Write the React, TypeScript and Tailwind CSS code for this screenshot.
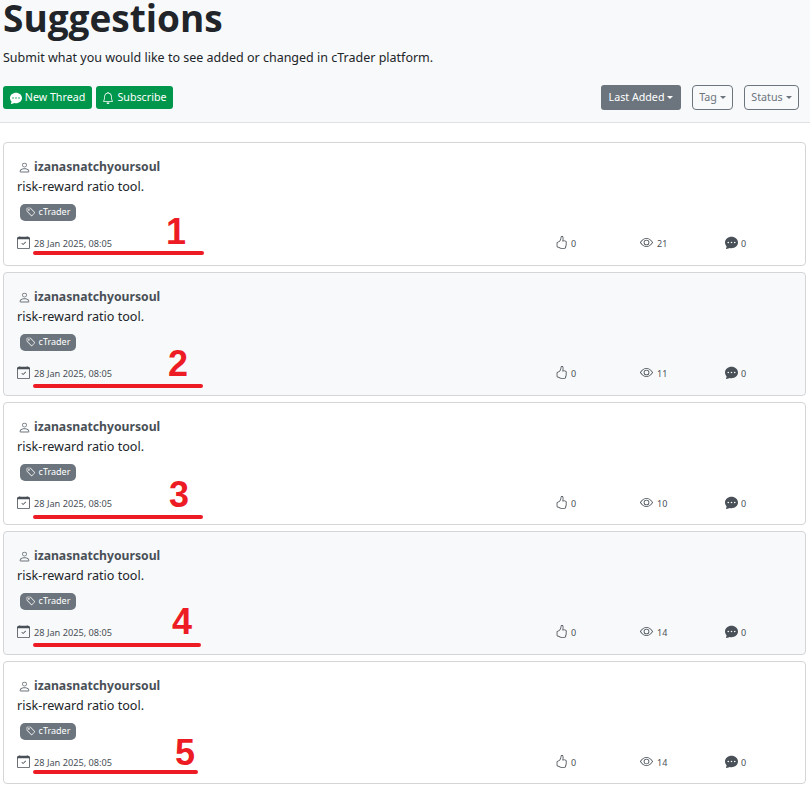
import { BsChatDotsFill, BsBell, BsPerson, BsTag, BsCalendarCheck, BsHandThumbsUp, BsEye } from "react-icons/bs";

const threads = [
  { views: 21, alt: false, mark: "1", lineW: "w-[171px]", numL: "left-[162px]", numT: "top-[69px]", lineT: "top-[108px]", h: "h-[124px]" },
  { views: 11, alt: true, mark: "2", lineW: "w-[170px]", numL: "left-[164px]", numT: "top-[71px]", lineT: "top-[111px]", h: "h-[124px]" },
  { views: 10, alt: false, mark: "3", lineW: "w-[170px]", numL: "left-[165px]", numT: "top-[72px]", lineT: "top-[112px]", h: "h-[123px]" },
  { views: 14, alt: true, mark: "4", lineW: "w-[168px]", numL: "left-[168px]", numT: "top-[70px]", lineT: "top-[111px]", h: "h-[124px]" },
  { views: 14, alt: false, mark: "5", lineW: "w-[165px]", numL: "left-[171px]", numT: "top-[71px]", lineT: "top-[108px]", h: "h-[123px]" },
];

function Caret() {
  return <span className="ml-[3px] inline-block h-0 w-0 border-x-[3px] border-t-[3px] border-x-transparent border-t-current align-middle" />;
}

export default function App() {
  return (
    <div className="min-h-[786px] overflow-hidden bg-white font-['Noto_Sans','Open_Sans',sans-serif] text-[#212529]">
      <header className="h-[123px] border-b border-[#dee2e6] bg-[#f8f9fa] pl-[3px] pr-[11px]">
        <h1 className="h-[41px] text-[37px] leading-[36px] font-bold font-['Open_Sans','Noto_Sans',sans-serif]">Suggestions</h1>
        <p className="mt-[7px] text-[12.5px] leading-[20px]">Submit what you would like to see added or changed in cTrader platform.</p>
        <div className="mt-[17px] flex items-center justify-between">
          <div className="flex gap-[4px]">
            <button className="flex h-[23px] w-[89px] items-center justify-center gap-[3px] rounded-[3px] bg-[#00964b] text-[10.7px] text-white">
              <BsChatDotsFill className="text-[12px]" /> New Thread
            </button>
            <button className="flex h-[23px] w-[77px] items-center justify-center gap-[3px] rounded-[3px] bg-[#00964b] text-[10.7px] text-white">
              <BsBell className="text-[12px]" /> Subscribe
            </button>
          </div>
          <div className="flex items-center">
            <button className="flex h-[25px] w-[80px] items-center justify-center rounded-[3px] bg-[#6c757d] text-[10.7px] text-white">
              Last Added
              <Caret />
            </button>
            <button className="ml-[11px] flex h-[25px] w-[41px] items-center justify-center rounded-[4px] border border-[#6c757d] text-[10.7px] text-[#6c757d]">
              Tag
              <Caret />
            </button>
            <button className="ml-[11px] flex h-[25px] w-[55px] items-center justify-center rounded-[4px] border border-[#6c757d] text-[10.7px] text-[#6c757d]">
              Status
              <Caret />
            </button>
          </div>
        </div>
      </header>
      <main className="flex flex-col gap-[6px] pt-[19px] pl-[3px] pr-[4px]">
        {threads.map((t) => (
          <article
            key={t.mark}
            className={`relative ${t.h} rounded-[4px] border border-[#d3d5d7] px-[13px] pt-[15px] ${t.alt ? "bg-[#f8f9fa]" : "bg-white"}`}
          >
            <div className="flex h-[18px] items-center gap-[3px] pl-[1px]">
              <BsPerson className="text-[13px] text-[#6c757d]" />
              <span className="text-[12.2px] font-bold text-[#495057]">izanasnatchyoursoul</span>
            </div>
            <p className="mt-[1px] text-[12.6px] leading-[20px]">risk-reward ratio tool.</p>
            <div className="mt-[2px] pl-[3px]">
              <span className="inline-flex h-[17px] w-[56px] items-center justify-center gap-[3px] rounded-[5px] bg-[#6c757d] text-[9px] text-white">
                <BsTag className="text-[10px]" /> cTrader
              </span>
            </div>
            <div className="mt-[11px] flex items-center">
              <BsCalendarCheck className="text-[13px] text-[#495057]" />
              <span className="mt-[3px] ml-[4px] w-[78px] whitespace-nowrap text-[9.2px] text-[#495057]">28 Jan 2025, 08:05</span>
              <div className="ml-[443px] flex">
                <div className="flex w-[85px] items-center gap-[3px]">
                  <BsHandThumbsUp className="text-[13px] text-[#495057]" />
                  <span className="mt-[2px] text-[9px] text-[#495057]">0</span>
                </div>
                <div className="flex w-[85px] items-center gap-[4px]">
                  <BsEye className="text-[13px] text-[#495057]" />
                  <span className="mt-[2px] text-[9px] text-[#495057]">{t.views}</span>
                </div>
                <div className="flex items-center gap-[3px]">
                  <BsChatDotsFill className="text-[13px] text-[#495057]" />
                  <span className="mt-[2px] text-[9px] text-[#495057]">0</span>
                </div>
              </div>
            </div>
            <div className={`absolute left-[29px] ${t.lineT} h-[4px] ${t.lineW} rounded-full bg-[#ed1c24]`} />
            <span className={`absolute ${t.numL} ${t.numT} font-['Liberation_Sans',sans-serif] text-[36px] leading-[40px] font-bold text-[#ed1c24]`}>
              {t.mark}
            </span>
          </article>
        ))}
      </main>
    </div>
  );
}
